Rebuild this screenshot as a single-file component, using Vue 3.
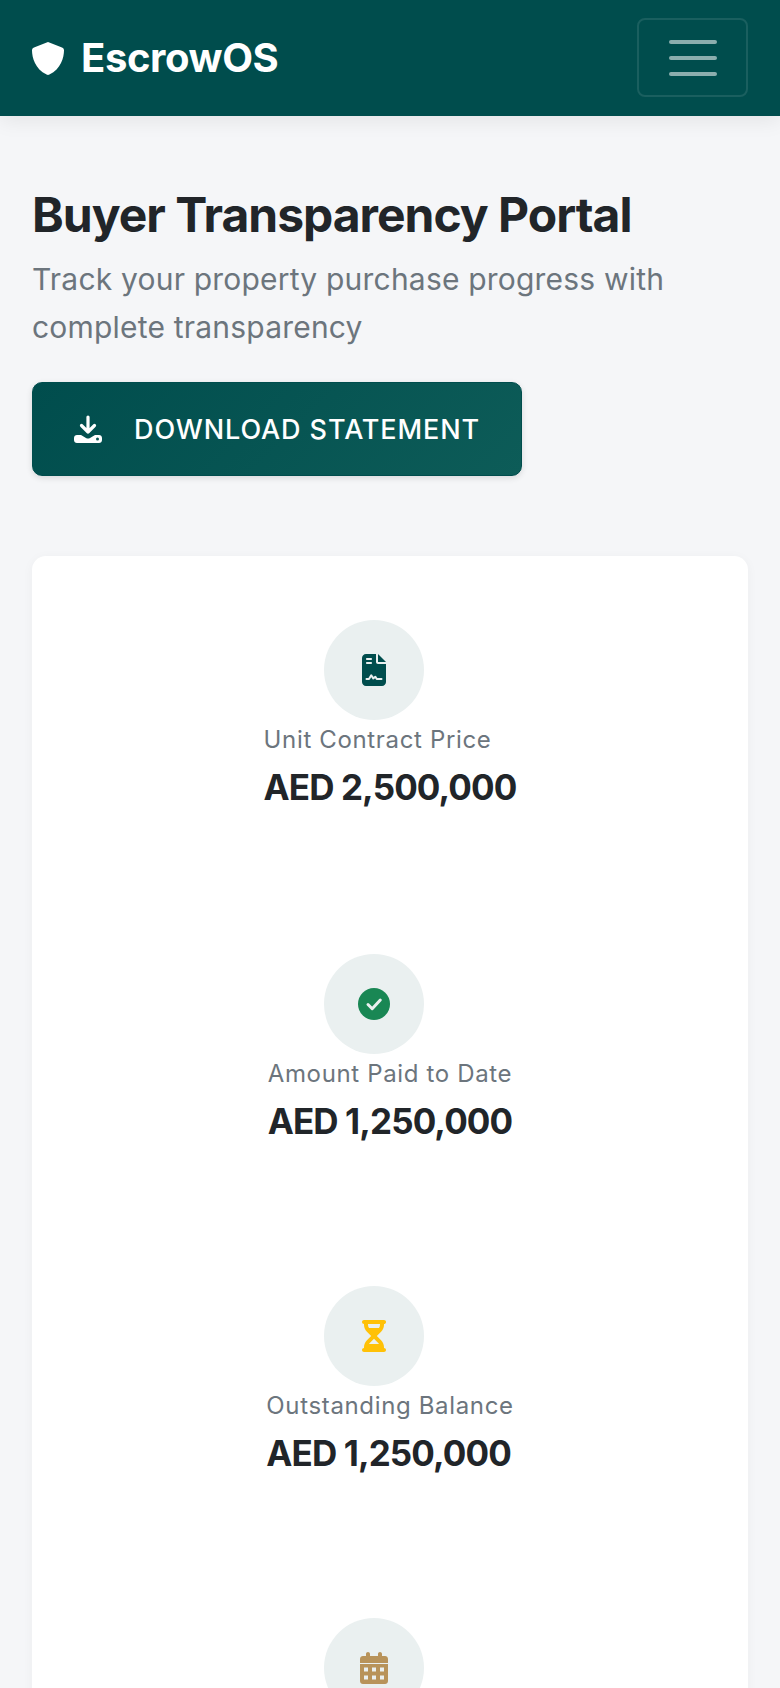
<script setup>
const stats = [
  { label: 'Unit Contract Price', value: 'AED 2,500,000', icon: 'contract' },
  { label: 'Amount Paid to Date', value: 'AED 1,250,000', icon: 'check' },
  { label: 'Outstanding Balance', value: 'AED 1,250,000', icon: 'hourglass' },
]
</script>

<template>
  <div class="page">
    <nav class="navbar">
      <div class="brand">
        <svg class="brand-icon" viewBox="0 0 32 33">
          <path d="M16 0 L30 5.6 C31.2 6.1 32 7.1 32 8.4 C31.9 15.5 29 26.8 17.4 32.5 C16.5 33 15.5 33 14.6 32.5 C3 26.8 .1 15.5 0 8.4 C0 7.1 .8 6.1 2 5.6 Z" fill="#fff" />
        </svg>
        <span>EscrowOS</span>
      </div>
      <button class="toggler">
        <span></span>
        <span></span>
        <span></span>
      </button>
    </nav>

    <main class="content">
      <h1>Buyer Transparency Portal</h1>
      <p class="subtitle">Track your property purchase progress with complete transparency</p>
      <button class="download">
        <svg class="download-icon" viewBox="0 0 28 28">
          <path d="M14 2v15M7.500 10.500l6.500 6.500 6.500-6.500" fill="none" stroke="#fff" stroke-width="3.2" stroke-linecap="round" stroke-linejoin="round" />
          <path d="M3 20h4l5 3c1.300.8 2.700.8 4 0l5-3h4c1.700 0 3 1.300 3 3v2c0 1.700-1.300 3-3 3H3c-1.700 0-3-1.300-3-3v-2c0-1.700 1.300-3 3-3z" fill="#fff" />
          <circle cx="23.500" cy="24" r="1.500" fill="#0a5856" />
        </svg>
        DOWNLOAD STATEMENT
      </button>

      <section class="card">
        <div v-for="stat in stats" :key="stat.label" class="stat">
          <div class="circle">
            <svg v-if="stat.icon === 'contract'" class="icon-contract" viewBox="0 0 384 512">
              <path d="M64 0C28.700 0 0 28.700 0 64v384c0 35.300 28.700 64 64 64h256c35.300 0 64-28.700 64-64V160H256c-17.700 0-32-14.300-32-32V0H64zm192 0v128h128L256 0zM80 64h64c8.800 0 16 7.200 16 16s-7.200 16-16 16H80c-8.800 0-16-7.200-16-16s7.200-16 16-16zm0 64h64c8.800 0 16 7.200 16 16s-7.200 16-16 16H80c-8.800 0-16-7.200-16-16s7.200-16 16-16z" fill="#004d4d" />
              <path d="M72 400h40l36-60 32 50 34-26 22 36h76" fill="none" stroke="#eaf0f0" stroke-width="32" stroke-linecap="round" stroke-linejoin="round" />
            </svg>
            <svg v-else-if="stat.icon === 'check'" class="icon-check" viewBox="0 0 32 32">
              <circle cx="16" cy="16" r="16" fill="#198754" />
              <path d="M10 16.500l4.200 4.200L22.300 12" fill="none" stroke="#eaf0f0" stroke-width="3" stroke-linecap="round" stroke-linejoin="round" />
            </svg>
            <svg v-else class="icon-hourglass" viewBox="0 0 384 512">
              <path d="M32 0C14.300 0 0 14.300 0 32S14.300 64 32 64V75c0 42.400 16.900 83.100 46.900 113.100L146.700 256 78.900 323.900C48.900 353.900 32 394.600 32 437v11c-17.700 0-32 14.300-32 32s14.300 32 32 32H352c17.700 0 32-14.300 32-32s-14.300-32-32-32V437c0-42.400-16.900-83.100-46.900-113.100L237.300 256l67.900-67.900c30-30 46.900-70.700 46.900-113.100V64c17.700 0 32-14.300 32-32s-14.300-32-32-32H32zM96 75V64H288V75c0 19-5.600 37.400-16 53H112c-10.300-15.600-16-34-16-53zm16 309c3.500-5.300 7.600-10.300 12.100-14.900L192 301.300l67.900 67.900c4.600 4.600 8.600 9.600 12.100 14.900H112z" fill="#ffc107" fill-rule="evenodd" />
            </svg>
          </div>
          <div class="stat-text">
            <div class="label">{{ stat.label }}</div>
            <div class="value">{{ stat.value }}</div>
          </div>
        </div>
        <div class="stat">
          <div class="circle">
            <svg class="icon-calendar" viewBox="0 0 28 32">
              <path d="M8 0c1.100 0 2 .9 2 2v2h8V2c0-1.100.9-2 2-2s2 .9 2 2v2h3c1.700 0 3 1.300 3 3v4H0V7c0-1.700 1.300-3 3-3h3V2c0-1.100.9-2 2-2z" fill="#b8935a" />
              <path fill-rule="evenodd" d="M0 12h28v17c0 1.700-1.300 3-3 3H3c-1.700 0-3-1.300-3-3V12zm4 3.500v4h4v-4H4zm8 0v4h4v-4h-4zm8 0v4h4v-4h-4zM4 23.500v4h4v-4H4zm8 0v4h4v-4h-4zm8 0v4h4v-4h-4z" fill="#b8935a" />
            </svg>
          </div>
        </div>
      </section>
    </main>
  </div>
</template>

<style scoped>
.page {
  height: 1688px;
  overflow: hidden;
  background: #f5f6f8;
  font-family: Inter, "Liberation Sans", sans-serif;
  color: #212529;
}

.navbar {
  height: 116px;
  box-sizing: border-box;
  padding: 18px 32px 19px;
  background: #004d4d;
  display: flex;
  align-items: center;
  justify-content: space-between;
  box-shadow: 0 4px 20px rgba(0, 0, 0, 0.08);
  position: relative;
}

.brand {
  display: flex;
  align-items: center;
  gap: 17px;
  font-size: 40px;
  font-weight: 700;
  letter-spacing: -0.4px;
  color: #fff;
}

.brand-icon {
  width: 32px;
  height: 33px;
  margin-top: 2px;
}

.toggler {
  width: 111px;
  height: 79px;
  box-sizing: border-box;
  background: none;
  border: 2px solid rgba(255, 255, 255, 0.1);
  border-radius: 8px;
  display: flex;
  flex-direction: column;
  align-items: center;
  justify-content: center;
  gap: 12px;
  padding: 0;
}

.toggler span {
  width: 48px;
  height: 4px;
  border-radius: 2px;
  background: rgba(255, 255, 255, 0.55);
}

.content {
  padding: 70px 32px 0;
}

h1 {
  margin: 0;
  font-size: 48px;
  line-height: 58px;
  font-weight: 700;
  letter-spacing: -1px;
}

.subtitle {
  margin: 11px 0 0;
  font-size: 30px;
  line-height: 48px;
  color: #6c757d;
  letter-spacing: 0.2px;
}

.download {
  margin-top: 31px;
  width: 490px;
  height: 94px;
  box-sizing: border-box;
  display: flex;
  align-items: center;
  gap: 32px;
  padding: 0 0 0 41px;
  font-family: inherit;
  font-size: 27px;
  font-weight: 500;
  letter-spacing: 0.9px;
  color: #fff;
  background: linear-gradient(135deg, #004d4d, #0d5c58);
  border: 1px solid #004d4d;
  border-radius: 10px;
  box-shadow: 0 2px 6px rgba(0, 0, 0, 0.12);
}

.download-icon {
  width: 28px;
  height: 28px;
  flex: none;
}

.card {
  margin-top: 80px;
  background: #fff;
  border-radius: 14px;
  box-shadow: 0 2px 12px rgba(0, 0, 0, 0.04);
  padding: 64px 0 0;
}

.stat {
  display: flex;
  flex-direction: column;
  align-items: center;
  height: 332px;
}

.stat:first-child {
  height: 334px;
}

.circle {
  width: 100px;
  height: 100px;
  flex: none;
  margin-right: 32px;
  border-radius: 50%;
  background: #eaf0f0;
  display: flex;
  align-items: center;
  justify-content: center;
}

.stat-text {
  width: max-content;
}

.label {
  margin-top: 2px;
  font-size: 24px;
  line-height: 36px;
  color: #6c757d;
  letter-spacing: 0.65px;
}

.value {
  margin-top: 8px;
  font-size: 35px;
  line-height: 42px;
  font-weight: 700;
  letter-spacing: -0.9px;
}

.icon-contract,
.icon-hourglass {
  width: 24px;
  height: 32px;
}

.icon-check {
  width: 32px;
  height: 32px;
}

.icon-calendar {
  width: 28px;
  height: 32px;
}
</style>

<style>
body {
  margin: 0;
}
</style>
